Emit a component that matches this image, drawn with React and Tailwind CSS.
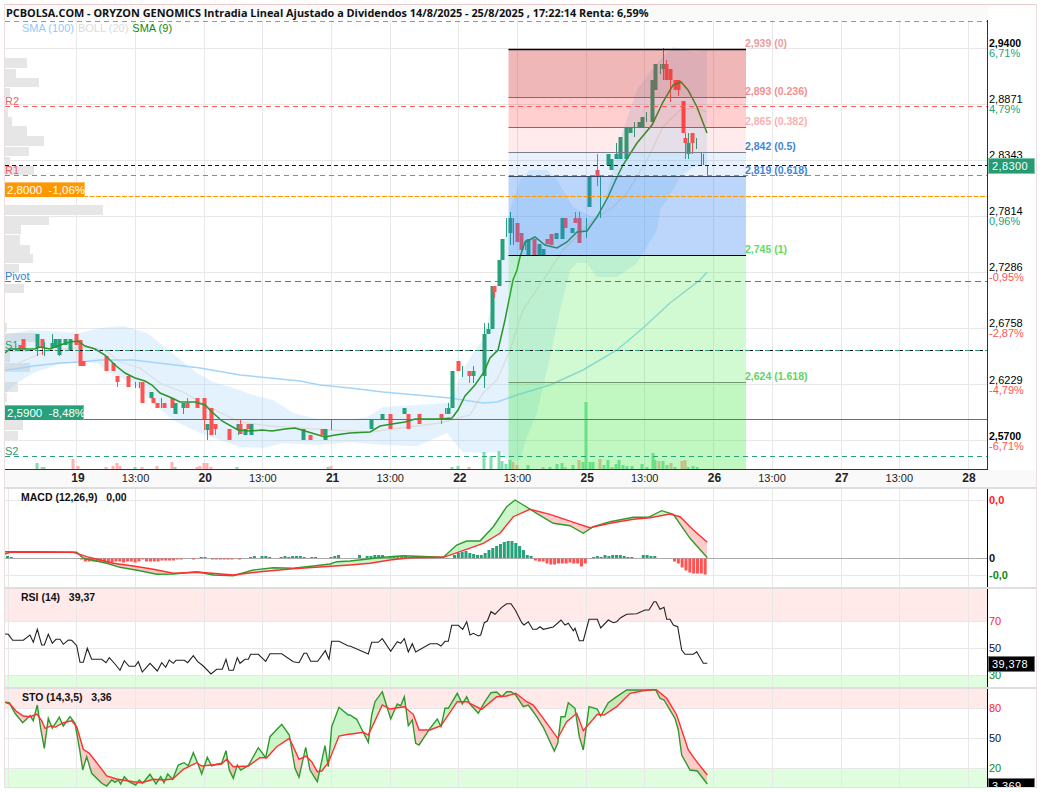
import React from 'react';

const GREEN = '#26a17a';
const RED = '#ff5252';
const GRID_X = [76, 135, 204, 262, 331, 390, 458, 517, 586, 644, 713, 772, 841, 899, 968];

// zoom readings -> page coordinates
const a = (pts) => pts.map(([x, y]) => [x / 3, 480 + y / 3]);
const b = (pts) => pts.map(([x, y]) => [350 + x / 3, 480 + y / 3]);
const toPts = (pts) => pts.map(([x, y]) => `${x.toFixed(1)},${y.toFixed(1)}`).join(' ');

const at = (pts, x) => {
  for (let i = 1; i < pts.length; i++) {
    if (x <= pts[i][0]) {
      const [x0, y0] = pts[i - 1];
      const [x1, y1] = pts[i];
      return y0 + ((y1 - y0) * (x - x0)) / (x1 - x0 || 1);
    }
  }
  return pts[pts.length - 1][1];
};

// polygons between two lines, split where they cross
const between = (p, q) => {
  const out = [];
  let run = null;
  const end = Math.min(p[p.length - 1][0], q[q.length - 1][0]);
  for (let x = 5; x <= end; x += 1) {
    const y1 = at(p, x);
    const y2 = at(q, x);
    const up = y1 < y2;
    if (!run || run.up !== up) {
      if (run) out.push(run);
      run = { up, top: [], bottom: [] };
    }
    run.top.push([x, y1]);
    run.bottom.unshift([x, y2]);
  }
  if (run) out.push(run);
  return out;
};

const CANDLES = [
  [20, 345, 349, 345, 349, 'r'], [23, 339, 349, 339, 349, 'r'], [37, 334, 348, 334, 356, 'g'], [42, 339, 348, 339, 355, 'r'],
  [44, 342, 343, 342, 356, 'g'], [52, 343, 348, 334, 348, 'g'], [55, 339, 348, 339, 348, 'g'], [59, 339, 355, 339, 356, 'g'],
  [65, 339, 345, 339, 345, 'g'], [70, 339, 350, 339, 350, 'g'], [76, 334, 345, 334, 345, 'r'], [80, 340, 366, 340, 366, 'r'],
  [83, 361, 366, 361, 366, 'r'], [106, 356, 371, 356, 371, 'r'], [113, 363, 371, 363, 371, 'r'], [117, 376, 382, 376, 387, 'r'],
  [128, 376, 387, 376, 387, 'r'], [135, 382, 383, 382, 388, 'g'], [139, 382, 383, 382, 388, 'g'], [142, 382, 403, 382, 403, 'r'],
  [151, 392, 398, 392, 398, 'g'], [153, 398, 403, 398, 403, 'r'], [157, 403, 408, 403, 408, 'r'], [161, 398, 399, 398, 408, 'g'],
  [164, 403, 408, 403, 408, 'r'], [172, 398, 408, 398, 408, 'r'], [175, 403, 414, 403, 414, 'g'], [183, 403, 408, 403, 414, 'g'],
  [187, 403, 408, 398, 408, 'r'], [197, 398, 408, 398, 408, 'r'], [204, 398, 420, 398, 430, 'r'], [207, 424, 430, 424, 440, 'g'],
  [211, 408, 435, 408, 435, 'r'], [215, 424, 429, 424, 435, 'r'], [229, 429, 440, 429, 440, 'r'], [238, 424, 430, 424, 435, 'g'],
  [240, 424, 434, 419, 434, 'r'], [245, 429, 435, 429, 435, 'g'], [248, 424, 429, 424, 429, 'r'], [251, 424, 435, 424, 435, 'g'],
  [303, 429, 440, 429, 440, 'g'], [310, 435, 440, 435, 440, 'r'], [322, 429, 435, 429, 435, 'r'], [325, 429, 440, 429, 440, 'g'],
  [331, 429, 430, 419, 430, 'g'], [371, 419, 429, 419, 429, 'g'], [382, 414, 419, 414, 419, 'g'], [390, 414, 429, 414, 429, 'r'],
  [404, 408, 414, 408, 414, 'g'], [408, 414, 429, 414, 429, 'r'], [419, 414, 424, 414, 424, 'r'], [441, 414, 419, 414, 424, 'r'],
  [445, 408, 409, 408, 414, 'g'], [448, 408, 414, 403, 414, 'g'], [452, 371, 408, 371, 408, 'g'], [458, 361, 371, 361, 371, 'r'],
  [462, 366, 367, 366, 377, 'g'], [469, 371, 376, 371, 383, 'r'], [473, 371, 376, 366, 383, 'g'], [484, 334, 376, 323, 388, 'g'],
  [488, 329, 334, 323, 334, 'g'], [492, 286, 329, 286, 329, 'g'], [494, 286, 292, 286, 298, 'r'], [499, 260, 286, 260, 286, 'g'],
  [502, 239, 260, 239, 260, 'g'], [506, 218, 219, 218, 237, 'g'], [510, 218, 233, 212, 245, 'g'], [513, 218, 219, 218, 245, 'g'],
  [517, 223, 242, 223, 242, 'r'], [521, 233, 250, 233, 250, 'r'], [525, 240, 241, 240, 250, 'r'], [528, 239, 255, 239, 255, 'g'],
  [534, 239, 255, 239, 255, 'r'], [539, 244, 255, 244, 255, 'g'], [543, 249, 255, 249, 255, 'g'], [547, 239, 244, 239, 244, 'r'],
  [551, 234, 245, 234, 245, 'r'], [556, 233, 239, 233, 239, 'g'], [562, 218, 239, 218, 239, 'g'], [565, 218, 228, 218, 228, 'r'],
  [572, 228, 233, 228, 233, 'g'], [575, 218, 223, 212, 223, 'r'], [579, 218, 243, 212, 243, 'r'], [586, 218, 219, 218, 238, 'g'],
  [589, 176, 207, 176, 207, 'g'], [597, 170, 176, 154, 186, 'r'], [600, 176, 177, 176, 218, 'g'], [608, 154, 165, 154, 165, 'g'],
  [611, 159, 170, 159, 170, 'g'], [616, 154, 159, 143, 159, 'g'], [620, 137, 159, 137, 159, 'g'], [626, 127, 159, 127, 159, 'g'],
  [630, 127, 133, 127, 133, 'g'], [634, 122, 123, 122, 137, 'g'], [639, 122, 127, 122, 127, 'g'], [642, 117, 127, 117, 127, 'g'],
  [646, 112, 113, 112, 122, 'g'], [652, 80, 122, 80, 122, 'g'], [655, 64, 90, 64, 90, 'g'], [660, 64, 65, 64, 74, 'g'],
  [663, 64, 69, 48, 80, 'g'], [666, 64, 80, 60, 80, 'r'], [670, 69, 80, 69, 102, 'r'], [675, 80, 90, 80, 90, 'r'],
  [678, 80, 90, 80, 96, 'r'], [683, 101, 133, 101, 133, 'r'], [685, 138, 143, 133, 159, 'r'], [688, 143, 154, 133, 159, 'g'],
  [692, 133, 143, 133, 154, 'r'], [696, 138, 139, 138, 149, 'g'], [701, 153, 154, 153, 165, 'g'], [703, 154, 155, 154, 165, 'g'],
  [707, 165, 166, 165, 176, 'g'],
];

const VOLUMES = [
  [37, 463, 'g'], [42, 467, 'r'], [44, 467, 'g'], [73, 459, 'r'], [78, 466, 'r'], [106, 467, 'r'], [113, 466, 'r'], [117, 463, 'r'],
  [120, 466, 'r'], [135, 467, 'g'], [142, 467, 'r'], [157, 466, 'r'], [172, 462, 'r'], [175, 467, 'g'], [197, 467, 'r'], [200, 466, 'r'],
  [204, 463, 'r'], [207, 463, 'r'], [211, 467, 'r'], [237, 467, 'g'], [328, 467, 'g'], [331, 466, 'r'], [452, 467, 'g'], [458, 466, 'g'],
  [469, 467, 'r'], [484, 452, 'g'], [491, 456, 'g'], [499, 451, 'g'], [502, 461, 'g'], [506, 464, 'g'], [510, 460, 'g'], [513, 462, 'r'],
  [517, 465, 'r'], [528, 465, 'g'], [543, 467, 'r'], [550, 467, 'g'], [557, 464, 'g'], [562, 463, 'g'], [565, 467, 'r'], [573, 465, 'g'],
  [579, 460, 'r'], [583, 462, 'g'], [586, 402, 'g'], [590, 462, 'g'], [593, 462, 'g'], [600, 459, 'r'], [604, 465, 'g'], [608, 460, 'g'],
  [612, 467, 'r'], [616, 464, 'g'], [619, 460, 'g'], [623, 465, 'g'], [627, 466, 'g'], [632, 466, 'g'], [642, 464, 'g'], [647, 467, 'g'],
  [653, 453, 'g'], [655, 460, 'g'], [659, 461, 'r'], [663, 461, 'g'], [667, 465, 'g'], [671, 463, 'r'], [675, 467, 'g'], [682, 461, 'r'],
  [685, 460, 'r'], [688, 467, 'g'], [693, 466, 'g'], [697, 467, 'g'],
];

const PROFILE = [
  [58, 10, 22], [69, 9, 11], [78, 9, 34], [88, 9, 5], [108, 9, 3], [117, 9, 7], [126, 10, 22], [136, 10, 39], [147, 9, 24], [157, 8, 5],
  [166, 9, 29], [205, 10, 98], [216, 9, 44], [225, 9, 16], [235, 10, 15], [245, 9, 25], [254, 9, 28], [264, 9, 14], [284, 9, 19], [323, 9, 2],
  [333, 9, 32], [343, 9, 22], [352, 10, 5], [363, 9, 25], [382, 10, 13], [393, 9, 2], [420, 10, 18], [431, 9, 13],
];

const UPPER = [[5, 335], [30, 330], [80, 333], [100, 328], [123, 326], [147, 333], [160, 343], [177, 357], [197, 373], [213, 382], [233, 388], [253, 395], [273, 400], [293, 413], [317, 419], [350, 420], [367, 417], [383, 407], [417, 405], [447, 403], [453, 397], [463, 370], [473, 353], [483, 340], [493, 300], [500, 270], [505, 235], [510, 210], [520, 180], [530, 170], [547, 170], [557, 180], [573, 207], [593, 217], [603, 210], [613, 170], [623, 130], [637, 90], [655, 65], [673, 47], [693, 52], [707, 50]];
const LOWER = [[5, 393], [17, 383], [33, 373], [57, 365], [77, 362], [97, 363], [110, 373], [133, 383], [153, 403], [173, 420], [200, 433], [220, 440], [240, 447], [263, 448], [283, 443], [317, 445], [350, 442], [383, 445], [417, 446], [447, 433], [455, 443], [463, 452], [483, 453], [500, 452], [510, 462], [520, 460], [527, 437], [537, 413], [550, 357], [560, 310], [570, 270], [577, 263], [587, 263], [597, 277], [617, 277], [637, 263], [657, 230], [660, 210], [673, 190], [680, 177], [693, 167], [707, 165]];
const BOLL = [[5, 369], [30, 358], [50, 350], [90, 347], [105, 350], [120, 362], [140, 368], [160, 383], [185, 393], [205, 405], [240, 422], [270, 426], [300, 428], [330, 430], [370, 432], [400, 428], [440, 423], [470, 415], [483, 393], [497, 380], [510, 350], [523, 310], [550, 270], [563, 250], [593, 220], [613, 207], [627, 193], [647, 160], [663, 127], [680, 110], [693, 108], [707, 112]];
const SMA100 = [[5, 370], [15, 369], [33, 366], [60, 363], [80, 362], [100, 360], [133, 360], [167, 364], [200, 368], [240, 375], [270, 378], [300, 381], [320, 385], [350, 388], [383, 392], [417, 395], [450, 398], [483, 403], [497, 402], [517, 395], [550, 385], [583, 370], [617, 350], [643, 328], [670, 303], [700, 280], [707, 272]];
const SMA9 = [[5, 353], [10, 349], [35, 349], [40, 347], [50, 349], [60, 345], [70, 342], [78, 341], [85, 346], [95, 349], [105, 355], [115, 365], [125, 373], [135, 378], [145, 381], [152, 385], [160, 393], [172, 398], [180, 402], [195, 402], [205, 405], [212, 412], [222, 421], [238, 430], [250, 431], [262, 430], [272, 431], [285, 429], [295, 428], [305, 431], [315, 434], [325, 437], [335, 435], [350, 433], [370, 432], [380, 426], [392, 424], [405, 422], [415, 419], [440, 419], [452, 418], [458, 410], [465, 396], [475, 385], [484, 372], [490, 358], [498, 350], [505, 320], [513, 280], [517, 270], [520, 257], [525, 242], [535, 237], [545, 245], [557, 248], [567, 242], [577, 232], [587, 231], [597, 217], [608, 197], [617, 177], [623, 165], [637, 143], [652, 125], [663, 102], [673, 85], [681, 82], [688, 90], [697, 107], [707, 133]];

const FIB = [
  [49.5, 97.5, 'rgba(210,50,50,.35)'], [97.5, 127.5, 'rgba(255,0,0,.19)'], [127.5, 152.5, 'rgba(255,0,0,.08)'], [152.5, 176.5, 'rgba(33,120,230,.1)'],
  [176.5, 255.5, 'rgba(33,120,243,.3)'], [255.5, 382.5, 'rgba(50,230,50,.22)'], [382.5, 469, 'rgba(40,230,40,.29)'],
];
const FIB_LINES = [[49.5, '#000', 1.3], [97.5, '#7d6a6a', 1], [127.5, '#7d6a6a', 1], [152.5, '#7a7f88', 1], [176.5, '#39495f', 1], [255.5, '#000', 1.2], [382.5, '#6f9a6f', 1]];
const FIB_LABELS = [
  ['2,939 (0)', 37, 'text-[#ee9c9c]'], ['2,893 (0.236)', 85, 'text-[#f58f8f]'], ['2,865 (0.382)', 115, 'text-[#fbb0b0]'], ['2,842 (0.5)', 140, 'text-[#3f86d8]'],
  ['2,819 (0.618)', 164, 'text-[#3f86d8]'], ['2,745 (1)', 243, 'text-[#62dc62]'], ['2,624 (1.618)', 370, 'text-[#62d462]'],
];
const LEVELS = [
  [21.5, '#ff6b6b', '5 4'], [106.5, '#ff5a5a', '5 4'], [165.5, '#0000cc', '4 3'], [175.5, '#ff5a5a', '5 4'], [196.5, '#ff9800', '5 1.5'],
  [281.5, '#2f80d8', '6 4'], [350.5, '#111', '3 2'], [350.5, GREEN, '5 5'], [456.5, GREEN, '5 4'],
];
const LEFT_TAGS = [['R2', 95, 'text-[#ff5a5a]'], ['R1', 164, 'text-[#ff5a5a]'], ['Pivot', 270, 'text-[#2f80d8]'], ['S1', 339, 'text-[#26a17a]'], ['S2', 445, 'text-[#26a17a]']];
const PRICES = [
  ['2,9400', '6,71%', true, true], ['2,8871', '4,79%', false, true], ['2,8343', '', false, true], ['2,7814', '0,96%', false, true],
  ['2,7286', '-0,95%', false, false], ['2,6758', '-2,87%', false, false], ['2,6229', '-4,79%', false, false], ['2,5700', '-6,71%', true, false],
];
const TIMES = ['19', '13:00', '20', '13:00', '21', '13:00', '22', '13:00', '25', '13:00', '26', '13:00', '27', '13:00', '28'];

const MACD_LINE = [...a([[15, 215], [30, 215], [110, 215], [230, 217], [250, 235], [320, 250], [360, 262], [420, 272], [470, 283], [520, 282], [590, 275], [640, 285], [700, 287], [760, 270], [820, 263], [880, 265], [940, 258], [990, 252], [1010, 245]]), ...b([[0, 243], [100, 232], [160, 227], [280, 232], [320, 195], [350, 183], [390, 183], [430, 140], [470, 80], [495, 60], [520, 75], [560, 100], [610, 130], [660, 137], [700, 160], [730, 140], [780, 125], [850, 112], [895, 112], [935, 92], [970, 103], [1020, 175], [1072, 233]])];
const MACD_SIG = [...a([[15, 222], [30, 217], [220, 217], [260, 230], [340, 250], [400, 258], [460, 268], [520, 280], [600, 277], [700, 285], [780, 275], [880, 266], [970, 260]]), ...b([[0, 255], [60, 250], [120, 240], [180, 233], [280, 232], [330, 215], [400, 190], [450, 160], [490, 110], [540, 88], [600, 103], [680, 130], [720, 143], [780, 130], [850, 118], [900, 113], [960, 102], [990, 110], [1030, 150], [1072, 187]])];
const HIST = [
  [6, [2, 1]], [80, [-1, -3, -3, -3, -3, -3, -4, -4, -4, -3, -3, -4, -3, -3, -4, -3, -1, -3, -3, -3, -3, -2, -2, -2, -2, -1, -1]],
  [192, [-1, 0, 1, 1, 0, -1, -1, -1, -1, -1, -1, 0, -1]], [249, [1, 2, 0, 2, 2, 1, 0, 0, 1, 2, 1, 2, 2, 2, 1, 0, 1, 1, 0, 0, 0, 1, 2, 3]],
  [358, [3, 0, 2, 2, 3, 3, 3, 0, 2, 1, 2, 2, 2, 1, 2, 2, 1, 1, 1, 0, 1, 1, 0, 0]],
  [453, [3, 5, 6, 7, 5, 4, 3, 3, 5, 8, 10, 12, 14, 16, 17, 17, 15, 12, 8, 3, 2]],
  [534, [-2, -3, -3, -5, -6, -6, -5, -5, -5, -4, -5, -5, -8, -5]],
  [592, [1, 2, 1, 3, 2, 3, 3, 3, 2, 1, 1, 0, 0, 3, 3, 2, 2]],
  [673, [-3, -5, -9, -12, -14, -15, -15, -15, -16]],
];

const RSI_LINE = [...a([[15, 462], [25, 463], [38, 481], [70, 481], [90, 465], [100, 487], [112, 448], [125, 495], [133, 495], [145, 463], [157, 490], [168, 478], [180, 478], [190, 493], [205, 480], [215, 481], [230, 497], [240, 547], [250, 547], [262, 505], [275, 538], [305, 538], [318, 548], [328, 533], [345, 552], [360, 571], [373, 542], [387, 559], [405, 559], [415, 545], [427, 576], [450, 550], [472, 573], [485, 548], [497, 562], [508, 540], [520, 550], [528, 541], [553, 541], [563, 548], [580, 527], [593, 545], [610, 558], [633, 582], [650, 568], [667, 568], [678, 538], [687, 571], [700, 571], [712, 533], [720, 550], [735, 538], [745, 538], [752, 523], [775, 523], [797, 544], [810, 521], [845, 521], [880, 545], [897, 548], [912, 520], [920, 520], [932, 544], [953, 544], [976, 512], [987, 538], [995, 484], [1017, 484], [1045, 498]]), ...b([[0, 498], [55, 522], [65, 487], [85, 487], [97, 476], [122, 514], [142, 485], [152, 490], [163, 476], [175, 516], [187, 491], [197, 516], [240, 491], [262, 491], [273, 498], [285, 484], [295, 484], [305, 436], [325, 436], [338, 448], [350, 425], [360, 465], [370, 460], [385, 468], [392, 465], [403, 428], [412, 423], [423, 395], [435, 403], [455, 382], [470, 371], [483, 371], [497, 392], [515, 428], [522, 435], [535, 425], [548, 448], [560, 448], [570, 440], [580, 448], [610, 441], [633, 420], [645, 435], [655, 430], [670, 452], [675, 445], [688, 482], [700, 482], [717, 418], [742, 418], [752, 444], [775, 420], [790, 428], [800, 425], [812, 413], [830, 403], [860, 401], [885, 390], [897, 390], [912, 365], [918, 365], [930, 388], [942, 382], [950, 418], [960, 418], [970, 435], [983, 440], [995, 510], [1005, 523], [1030, 523], [1040, 515], [1060, 550], [1072, 550]])];

const STO_K = [...a([[15, 667], [28, 668], [45, 700], [68, 728], [90, 707], [100, 722], [112, 675], [122, 745], [133, 805], [145, 715], [157, 745], [178, 712], [190, 738], [210, 710], [225, 730], [240, 815], [248, 870], [260, 830], [275, 880], [305, 910], [320, 918], [335, 900], [345, 907], [355, 900], [362, 912], [373, 890], [387, 905], [407, 915], [418, 900], [428, 910], [450, 883], [468, 912], [482, 890], [492, 908], [503, 882], [518, 898], [535, 855], [552, 848], [565, 857], [580, 818], [593, 850], [605, 882], [622, 832], [635, 858], [650, 853], [665, 850], [678, 812], [688, 870], [700, 895], [712, 855], [722, 870], [745, 857], [775, 803], [797, 833], [810, 770], [845, 733], [868, 765], [885, 865], [897, 892], [917, 802], [930, 870], [952, 905], [975, 797], [985, 860], [995, 740], [1017, 682], [1045, 705]]), ...b([[0, 705], [20, 718], [35, 748], [55, 787], [65, 705], [75, 665], [97, 635], [122, 717], [142, 672], [152, 677], [163, 650], [175, 737], [187, 720], [197, 790], [207, 795], [240, 745], [262, 717], [273, 740], [285, 685], [295, 685], [322, 640], [337, 672], [350, 650], [360, 672], [385, 700], [403, 668], [423, 638], [440, 636], [455, 650], [470, 635], [483, 635], [497, 645], [520, 680], [535, 675], [548, 693], [560, 710], [580, 742], [613, 813], [623, 790], [633, 710], [645, 710], [655, 668], [675, 685], [688, 770], [700, 810], [717, 680], [742, 687], [752, 708], [775, 668], [800, 650], [830, 630], [860, 630], [885, 630], [917, 630], [930, 655], [942, 660], [975, 715], [985, 750], [995, 825], [1020, 870], [1042, 873], [1072, 912]])];
const STO_D = [...a([[15, 667], [30, 672], [50, 695], [70, 708], [90, 710], [110, 702], [125, 722], [135, 745], [155, 737], [165, 742], [190, 728], [215, 722], [230, 740], [250, 808], [268, 820], [290, 848], [320, 888], [350, 897], [400, 905], [425, 908], [460, 898], [490, 900], [518, 897], [550, 868], [590, 848], [605, 858], [635, 855], [665, 852], [680, 838], [700, 860], [745, 858], [780, 833], [800, 833], [830, 800], [868, 775], [880, 800], [897, 838], [918, 828], [935, 845], [952, 875], [965, 873], [985, 848], [1017, 768], [1045, 763]]), ...b([[0, 763], [40, 757], [55, 765], [97, 675], [120, 687], [162, 680], [190, 703], [207, 750], [240, 750], [273, 737], [322, 665], [350, 665], [395, 688], [440, 650], [470, 648], [497, 640], [530, 665], [550, 675], [580, 715], [623, 775], [650, 725], [680, 700], [700, 752], [742, 703], [762, 705], [800, 680], [840, 640], [880, 632], [917, 628], [950, 655], [980, 705], [1015, 810], [1040, 845], [1072, 885]])];

const Grid = ({ top, bottom, rows, extra }) => (
  <g stroke="#e8e8e8" strokeWidth="1">
    {extra && <line x1="8.5" x2="8.5" y1={top} y2={bottom} />}
    {GRID_X.map((x) => <line key={x} x1={x + 0.5} x2={x + 0.5} y1={top} y2={bottom} />)}
    {rows.map((y) => <line key={y} x1="5" x2="987" y1={y} y2={y} />)}
  </g>
);

const Crossing = ({ p, q }) => (
  <>
    {between(p, q).map((r, i) => (
      <polygon key={i} points={toPts([...r.top, ...r.bottom])} fill={r.up ? 'rgba(60,220,60,.27)' : 'rgba(255,50,50,.25)'} />
    ))}
    <polyline points={toPts(p)} fill="none" stroke="#2e9a2e" strokeWidth="1.4" />
    <polyline points={toPts(q)} fill="none" stroke="#ff3030" strokeWidth="1.4" />
  </>
);

const MainChart = () => (
  <svg width="982" height="449" viewBox="5 20 982 449" className="block">
    <Grid top={20} bottom={469} rows={[48.5, 104.5, 160.5, 216.5, 272.5, 328.5, 384.5, 440.5]} />
    {PROFILE.map(([y, h, w]) => <rect key={y} x="5" y={y} width={w} height={h} fill="#e6e6e6" />)}
    {VOLUMES.map(([x, y, c], i) => (
      <rect key={i} x={x - 1.5} y={y} width="3" height={469 - y} fill={c === 'g' ? '#7fdfae' : '#ffb0b0'} />
    ))}
    <polygon points={toPts([...UPPER, ...[...LOWER].reverse()])} fill="rgba(144,202,249,.25)" />
    <polyline points={toPts(BOLL)} fill="none" stroke="#dedede" strokeWidth="1.3" />
    <polyline points={toPts(SMA100)} fill="none" stroke="#a3d5fb" strokeWidth="1.5" />
    {CANDLES.map(([x, top, bot, hi, lo, c], i) => {
      const color = c === 'g' ? GREEN : RED;
      return (
        <g key={i} fill={color} stroke={color}>
          <line x1={x + 0.5} x2={x + 0.5} y1={hi} y2={lo} strokeWidth="1" />
          {bot - top > 1 && <rect x={x - 1.5} y={top} width="4" height={bot - top} stroke="none" />}
        </g>
      );
    })}
    <polyline points={toPts(SMA9)} fill="none" stroke="#2a952a" strokeWidth="1.5" />
    {FIB.map(([y1, y2, fill]) => <rect key={y1} x="508.5" y={y1} width="237.5" height={y2 - y1} fill={fill} />)}
    {FIB_LINES.map(([y, stroke, w]) => <line key={y} x1="508.5" x2="746" y1={y} y2={y} stroke={stroke} strokeWidth={w} />)}
    {LEVELS.map(([y, stroke, dash], i) => <line key={i} x1="5" x2="987" y1={y} y2={y} stroke={stroke} strokeDasharray={dash} />)}
    <line x1="5" x2="987" y1="419.5" y2="419.5" stroke="#2a8f6f" />
  </svg>
);

const MacdChart = () => (
  <svg width="982" height="98" viewBox="5 489 982 98" className="block">
    <Grid top={489} bottom={587} rows={[500.5, 575.5]} extra />
    <line x1="5" x2="987" y1="558.5" y2="558.5" stroke="#aaa" />
    {HIST.map(([x0, hs], k) => hs.map((h, i) => (h === 0 ? null : (
      <rect key={`${k}-${i}`} x={x0 + i * 3.83} y={h > 0 ? 558 - h : 558.5} width="3" height={Math.abs(h)} fill={h > 0 ? GREEN : RED} />
    ))))}
    <Crossing p={MACD_LINE} q={MACD_SIG} />
  </svg>
);

const RsiChart = () => (
  <svg width="982" height="98" viewBox="5 589 982 98" className="block">
    <rect x="5" y="589" width="982" height="32" fill="#ffe9e9" />
    <rect x="5" y="675" width="982" height="12" fill="#e0fde0" />
    <Grid top={589} bottom={687} rows={[621.5, 648.5, 675.5]} extra />
    <polyline points={toPts(RSI_LINE)} fill="none" stroke="#222" strokeWidth="1.1" />
  </svg>
);

const StoChart = () => (
  <svg width="982" height="98" viewBox="5 689 982 98" className="block">
    <rect x="5" y="689" width="982" height="19" fill="#ffe9e9" />
    <rect x="5" y="768" width="982" height="19" fill="#e0fde0" />
    <Grid top={689} bottom={787} rows={[708.5, 738.5, 768.5]} extra />
    <Crossing p={STO_K} q={STO_D} />
  </svg>
);

const Tag = ({ className, children }) => (
  <div className={`absolute left-0 w-[47px] h-[16px] pl-[3px] border text-[11px] leading-[14px] tracking-[0.4px] text-white ${className}`}>{children}</div>
);

const Separator = () => <div className="h-[2px] bg-[#dedede]" />;

const Indicator = ({ chart, title, titleClass = 'pl-[16px]', axisClass, children }) => (
  <div className="flex h-[98px]">
    <div className="relative w-[983px] shrink-0 border-r border-black">
      {chart}
      <div className={`absolute left-0 top-[2px] ${titleClass} text-[10.5px] font-semibold leading-[12px] whitespace-pre text-[#111]`}>{title}</div>
    </div>
    <div className={`relative flex-1 flex flex-col overflow-hidden pl-[1px] text-[11px] leading-[12px] ${axisClass}`}>
      {children}
    </div>
  </div>
);

export default function App() {
  return (
    <div className="w-[1041px] h-[792px] overflow-hidden bg-white pt-1 font-['Liberation_Sans',sans-serif] text-black">
      <div className="ml-1 w-[1033px] border-x border-[#eadede]">
        <div className="h-4 border-t border-[#eccccc] pl-[1px] font-['Open_Sans',sans-serif] text-[10.88px] font-bold leading-[15px] whitespace-nowrap text-[#111]">
          <div className="w-[982px] h-full bg-[#fafafa]">
            PCBOLSA.COM - ORYZON GENOMICS Intradia Lineal Ajustado a Dividendos 14/8/2025 - 25/8/2025 , 17:22:14 Renta: 6,59%
          </div>
        </div>

        {/* precio */}
        <div className="flex h-[450px]">
          <div className="relative w-[983px] shrink-0 border-r border-b border-[#333]">
            <MainChart />
            <div className="absolute left-[17px] top-[2px] flex gap-[4px] text-[11px] leading-[12px]">
              <span className="text-[#90caf9]">SMA (100)</span>
              <span className="text-[#dcdcdc]">BOLL (20)</span>
              <span className="text-[#118811]">SMA (9)</span>
            </div>
            {LEFT_TAGS.map(([text, y, color]) => (
              <span key={text} className={`absolute left-0 text-[11px] leading-[12px] ${color}`} style={{ top: y - 20 }}>{text}</span>
            ))}
            {FIB_LABELS.map(([text, y, color]) => (
              <span key={text} className={`absolute left-[740px] text-[10.5px] font-bold leading-[12px] ${color}`} style={{ top: y - 20 }}>{text}</span>
            ))}
            <div className="absolute left-0 top-[162px] h-[15px] w-[80px] border-t border-r border-[#ffbe66] bg-[#ff9800] pl-[2px] text-[11.5px] leading-[15px] text-white whitespace-pre">2,8000  -1,06%</div>
            <div className="absolute left-0 top-[385px] h-[15px] w-[79px] border-t border-r border-[#6cc3a6] bg-[#26a17a] pl-[2px] text-[11.5px] leading-[15px] text-white whitespace-pre">2,5900  -8,48%</div>
          </div>
          <div className="relative flex-1 flex flex-col pt-[18px] pl-[1px]">
            {PRICES.map(([price, pct, bold, up]) => (
              <div key={price} className="h-[56.1px] shrink-0 text-[11px] leading-[10px]">
                <div className={bold ? 'font-bold text-[10.5px]' : ''}>{price}</div>
                <div className={up ? 'text-[#26a17a]' : 'text-[#ff5252]'}>{pct}</div>
              </div>
            ))}
            <Tag className="top-[138px] bg-[#269a72] border-[#7cc7ae]">2,8300</Tag>
          </div>
        </div>

        {/* eje de tiempo */}
        <div className="flex h-[17px] bg-[#f9f9f9] pl-[73px] leading-[17px] text-[#222]">
          {TIMES.map((text, i) => (
            <div key={i} className={`flex w-0 shrink-0 justify-center whitespace-nowrap ${i % 2 === 0 ? 'mr-[57.6px] text-[12px] font-bold' : 'mr-[69.7px] text-[11px]'}`}>
              {text}
            </div>
          ))}
        </div>
        <Separator />

        {/* MACD */}
        <Indicator chart={<MacdChart />} title="MACD (12,26,9)   0,00" axisClass="pt-[5px] font-bold">
          <div className="h-[58px] shrink-0 text-[#ff1a1a]">0,0</div>
          <div className="h-[17px] shrink-0 text-[#111]">0</div>
          <div className="text-[#118811]">-0,0</div>
        </Indicator>
        <Separator />

        {/* RSI */}
        <Indicator chart={<RsiChart />} title="RSI (14)   39,37" axisClass="pt-[26px] gap-[15px]">
          <div className="text-[#ff1a1a]">70</div>
          <div className="text-[#111]">50</div>
          <div className="text-[#118811]">30</div>
          <Tag className="top-[67px] bg-black border-[#777]">39,378</Tag>
        </Indicator>
        <Separator />

        {/* STO */}
        <Indicator chart={<StoChart />} title="STO (14,3,5)   3,36" titleClass="pl-[17px]" axisClass="pt-[13px] gap-[18px]">
          <div className="text-[#ff1a1a]">80</div>
          <div className="text-[#111]">50</div>
          <div className="text-[#118811]">20</div>
          <Tag className="top-[89px] bg-black border-[#777]">3,369</Tag>
        </Indicator>
        <div className="h-px bg-[#e2e2e2]" />
      </div>
    </div>
  );
}
